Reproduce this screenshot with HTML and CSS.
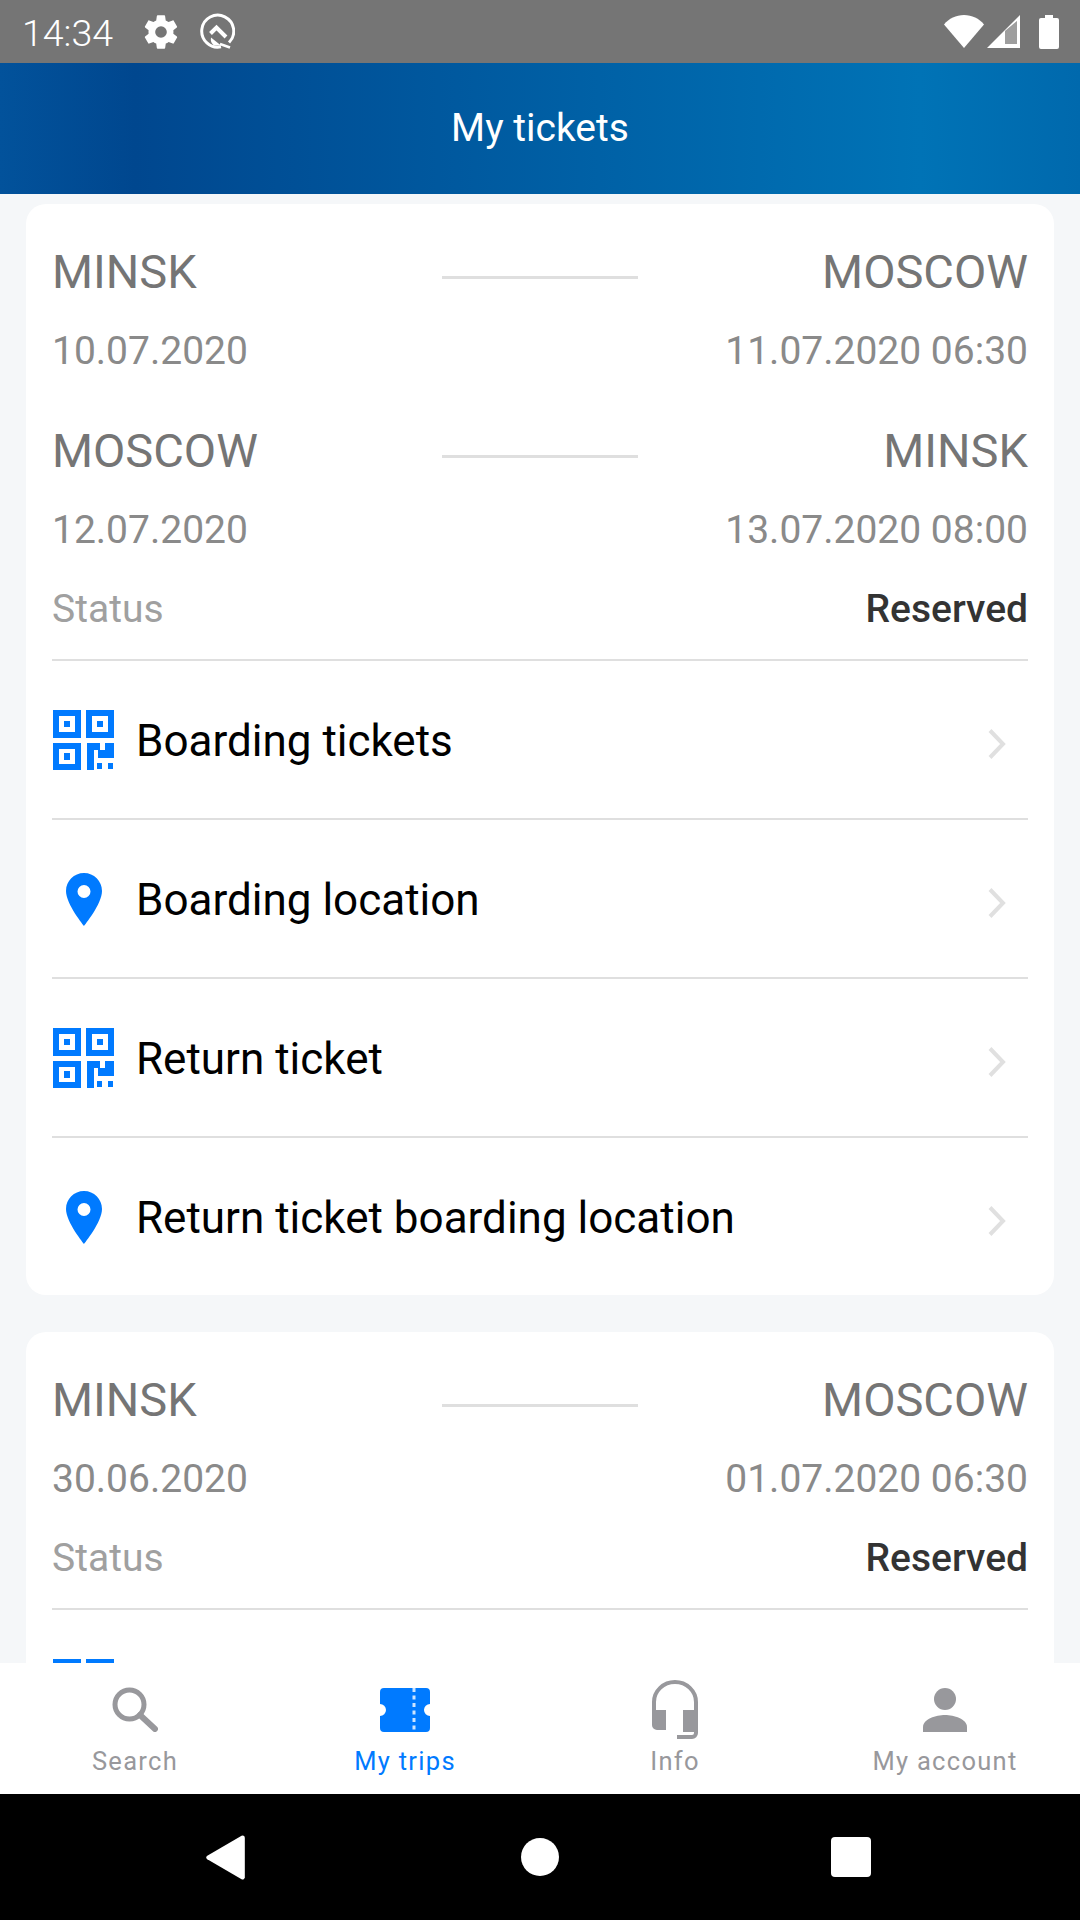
FILE: index.html
```html
<!DOCTYPE html>
<html lang="en">
<head>
<meta charset="utf-8">
<title>My tickets</title>
<link rel="stylesheet" href="styles.css">
</head>
<body>
<svg class="defs" width="0" height="0" aria-hidden="true">
  <defs>
    <symbol id="qr" viewBox="0 0 61 60">
      <path fill-rule="evenodd" d="M0 0h28v28H0zM6 6v16h16V6zM11 11h6v6h-6zM33 0h28v28H33zM39 6v16h16V6zM44 11h6v6h-6zM0 33h28v27H0zM6 39v15h16V39zM11 43h6v7h-6zM34 33h13v7h5v-7h9v15H45v-8h-4v20h-7zM44 53h5v6h-5zM55 53h5v6h-5z"/>
    </symbol>
    <symbol id="pin" viewBox="0 0 36 53">
      <path fill-rule="evenodd" d="M18 0C8 0 0 8 0 18c0 13 18 35 18 35s18-22 18-35C36 8 28 0 18 0zM18 12a6.500 6.500 0 1 1 0 13a6.500 6.500 0 0 1 0-13z"/>
    </symbol>
    <symbol id="chev" viewBox="0 0 20 32">
      <path d="M3 2.500l13 13.500L3 29.500" fill="none" stroke-width="4"/>
    </symbol>
  </defs>
</svg>

<div class="statusbar">
  <div class="status-left">
    <span class="clock">14:34</span>
    <svg class="ic-gear" viewBox="0 0 24 24"><path d="M19.400 13c.040-.320.060-.660.060-1s-.020-.680-.060-1l2.100-1.640c.190-.150.240-.420.120-.640l-2-3.460c-.120-.220-.390-.300-.610-.220l-2.490 1c-.520-.400-1.080-.730-1.690-.980l-.380-2.650A.49.490 0 0 0 14 2h-4c-.250 0-.460.180-.490.420l-.380 2.650c-.610.250-1.170.590-1.690.980l-2.490-1c-.230-.090-.490 0-.610.220l-2 3.460c-.130.220-.070.490.120.640L4.560 11c-.040.320-.060.660-.060 1s.020.680.060 1l-2.100 1.640c-.190.150-.240.420-.12.640l2 3.460c.120.220.390.300.610.220l2.490-1c.520.400 1.080.730 1.690.980l.380 2.650c.030.240.240.420.490.420h4c.250 0 .460-.180.490-.420l.380-2.650c.610-.250 1.170-.590 1.690-.980l2.490 1c.230.090.490 0 .610-.220l2-3.460c.120-.220.070-.490-.120-.640zM12 15.500a3.500 3.500 0 1 1 0-7 3.500 3.500 0 0 1 0 7z"/></svg>
    <svg class="ic-q" viewBox="0 0 36 37"><path d="M30 29.500A16 16 0 1 0 22 33.800" fill="none" stroke="#fff" stroke-width="3"/><path d="M11.500 20.500l6-6 9.500 9.500" fill="none" stroke="#fff" stroke-width="4"/><path d="M12 24.500l10 8h-7a8 8 0 0 1-3-8z" fill="#fff"/><path d="M21 31l10 3.500" fill="none" stroke="#fff" stroke-width="2.500"/></svg>
  </div>
  <div class="status-right">
    <svg class="ic-wifi" viewBox="0 0 40 33"><path d="M0 9.500C5 3.500 12 0 20 0s15 3.500 20 9.500L20 33z"/></svg>
    <svg class="ic-signal" viewBox="0 0 33 33"><path fill-rule="evenodd" d="M33 0v33H0zM30 6L18 16v13h12z"/><path class="signal-level" d="M30 6L18 16v13h12z"/></svg>
    <svg class="ic-batt" viewBox="0 0 20 34"><path d="M6 0h8v3h4a2 2 0 0 1 2 2v27a2 2 0 0 1-2 2H2a2 2 0 0 1-2-2V5a2 2 0 0 1 2-2h4z"/></svg>
  </div>
</div>

<header class="appbar"><h1 class="appbar-title">My tickets</h1></header>

<main class="content">
  <section class="card">
    <div class="route">
      <span class="city">MINSK</span><span class="rule"></span><span class="city end">MOSCOW</span>
      <span class="date">10.07.2020</span><span></span><span class="date end">11.07.2020 06:30</span>
    </div>
    <div class="route">
      <span class="city">MOSCOW</span><span class="rule"></span><span class="city end">MINSK</span>
      <span class="date">12.07.2020</span><span></span><span class="date end">13.07.2020 08:00</span>
    </div>
    <div class="status-row"><span class="status-label">Status</span><span class="status-value">Reserved</span></div>
    <a class="action"><span class="action-ic"><svg class="qr"><use href="#qr"/></svg></span><span class="action-label">Boarding tickets</span><svg class="chev"><use href="#chev"/></svg></a>
    <a class="action"><span class="action-ic"><svg class="pin"><use href="#pin"/></svg></span><span class="action-label">Boarding location</span><svg class="chev"><use href="#chev"/></svg></a>
    <a class="action"><span class="action-ic"><svg class="qr"><use href="#qr"/></svg></span><span class="action-label">Return ticket</span><svg class="chev"><use href="#chev"/></svg></a>
    <a class="action"><span class="action-ic"><svg class="pin"><use href="#pin"/></svg></span><span class="action-label">Return ticket boarding location</span><svg class="chev"><use href="#chev"/></svg></a>
  </section>
  <section class="card">
    <div class="route">
      <span class="city">MINSK</span><span class="rule"></span><span class="city end">MOSCOW</span>
      <span class="date">30.06.2020</span><span></span><span class="date end">01.07.2020 06:30</span>
    </div>
    <div class="status-row"><span class="status-label">Status</span><span class="status-value">Reserved</span></div>
    <a class="action"><span class="action-ic"><svg class="qr"><use href="#qr"/></svg></span></a>
  </section>
</main>

<nav class="tabs">
  <a class="tab">
    <svg class="tab-ic" viewBox="0 0 54 54"><circle cx="21.500" cy="21.500" r="14.500" fill="none" stroke="currentColor" stroke-width="5"/><path d="M32 32l15 14" fill="none" stroke="currentColor" stroke-width="6" stroke-linecap="round"/></svg>
    <span>Search</span>
  </a>
  <a class="tab active">
    <svg class="tab-ic" viewBox="0 0 54 54"><path fill-rule="evenodd" fill="currentColor" d="M6 5h42a4 4 0 0 1 4 4v12a6 6 0 0 0 0 12v12a4 4 0 0 1-4 4H6a4 4 0 0 1-4-4V33a6 6 0 0 0 0-12V9a4 4 0 0 1 4-4z"/><path d="M36 5v44" stroke="#fff" stroke-width="3" stroke-dasharray="4 3.500" opacity=".8"/></svg>
    <span>My trips</span>
  </a>
  <a class="tab">
    <svg class="tab-ic tab-ic-head" viewBox="0 0 54 62"><path fill="none" stroke="currentColor" stroke-width="4" d="M6 34V22a21 20 0 0 1 42 0v31a4 4 0 0 1-4 4H29"/><path fill="currentColor" d="M4 30h14v20H9a5 5 0 0 1-5-5zM35 30h14v22H35z"/></svg>
    <span>Info</span>
  </a>
  <a class="tab">
    <svg class="tab-ic" viewBox="0 0 54 54"><circle cx="27" cy="16" r="11"/><path d="M5 49v-5c0-8 13-12 22-12s22 4 22 12v5z"/></svg>
    <span>My account</span>
  </a>
</nav>

<div class="sysnav">
  <svg class="nav-back" viewBox="0 0 36 42"><path d="M34 0.500a2 2 0 0 1 2 2v37a2 2 0 0 1-3 1.700L1 22.700a2 2 0 0 1 0-3.400L33 .8z"/></svg>
  <span class="nav-home"></span>
  <span class="nav-recent"></span>
</div>
</body>
</html>
```
FILE: styles.css
```css
* { box-sizing: border-box; }
html, body { margin: 0; padding: 0; }
body {
  width: 1080px;
  height: 1920px;
  display: flex;
  flex-direction: column;
  overflow: hidden;
  font-family: Roboto, "Liberation Sans", sans-serif;
  background: #f5f7f9;
}
.defs { position: absolute; }

.statusbar {
  height: 63px;
  flex: none;
  background: #757575;
  color: #fff;
  display: flex;
  align-items: center;
  justify-content: space-between;
  padding: 0 21px 0 22px;
}
.status-left, .status-right { display: flex; align-items: center; }
.clock { font-size: 37.500px; font-weight: 300; margin-right: 28px; padding-top: 2px; }
.ic-gear { width: 40px; height: 40px; fill: #fff; margin-right: 18px; }
.ic-q { width: 36px; height: 37px; }
.ic-wifi { width: 40px; height: 33px; fill: #fff; margin-right: 3px; }
.ic-signal { width: 33px; height: 33px; fill: #fff; margin-right: 19px; }
.signal-level { opacity: .3; }
.ic-batt { width: 20px; height: 34px; fill: #fff; }

.appbar {
  height: 131px;
  flex: none;
  display: flex;
  align-items: center;
  justify-content: center;
  padding-bottom: 2px;
  background: linear-gradient(90deg, #02529b 0, #00478f 135px, #0073b6 920px, #0069ad 1080px);
}
.appbar-title { margin: 0; color: #fff; font-size: 39px; font-weight: 400; }

.content {
  flex: 1;
  min-height: 0;
  overflow: hidden;
  padding: 10px 26px 0;
  display: flex;
  flex-direction: column;
  gap: 37px;
}
.card {
  flex: none;
  background: #fff;
  border-radius: 20px;
  padding: 31px 26px 0;
}

.route {
  display: grid;
  grid-template-columns: 1fr 196px 1fr;
  grid-template-rows: 72px 86px;
  align-items: center;
}
.route + .route { margin-top: 21px; }
.city { font-size: 47px; color: #757575; }
.date { font-size: 39px; color: #8a8a8a; padding-top: 2px; }
.end { text-align: right; }
.rule { height: 3px; background: #dfdfdf; margin-top: 12px; }

.status-row {
  display: flex;
  justify-content: space-between;
  align-items: center;
  height: 87px;
  padding-bottom: 13px;
  font-size: 39px;
}
.status-label { color: #a0a0a0; }
.status-value { color: #333; font-weight: 500; }

.action {
  display: flex;
  align-items: center;
  height: 159px;
  border-top: 2px solid #dfdfdf;
  color: #000;
}
.action-ic {
  width: 84px;
  display: flex;
  justify-content: flex-start;
  padding: 1px 0 0 1px;
  flex: none;
}
.qr { width: 61px; height: 60px; fill: #007aff; filter: blur(.7px); }
.pin { width: 36px; height: 53px; fill: #007aff; margin-left: 13px; filter: blur(.5px); }
.action-label { flex: 1; font-size: 44px; padding-top: 3px; }
.chev { width: 20px; height: 32px; stroke: #e0e0e0; margin: 9px 21px 0 0; filter: blur(.4px); }

.tabs {
  height: 131px;
  flex: none;
  background: #fff;
  display: grid;
  grid-template-columns: repeat(4, 1fr);
}
.tab {
  display: flex;
  flex-direction: column;
  align-items: center;
  color: #98989c;
  fill: currentColor;
  font-size: 25.500px;
  letter-spacing: 1.300px;
  padding-top: 20px;
}
.tab-ic { width: 54px; height: 54px; flex: none; filter: blur(.6px); }
.tab-ic-head { margin-top: -3px; height: 62px; margin-bottom: -5px; }
.tab span { line-height: 30px; margin-top: 9px; }
.active { color: #007aff; }

.sysnav {
  height: 126px;
  flex: none;
  background: #000;
  display: flex;
  align-items: center;
  padding-left: 206px;
}
.nav-back { width: 39px; height: 45px; fill: #fff; flex: none; }
.nav-home { width: 38px; height: 38px; background: #fff; border-radius: 50%; margin-left: 276px; }
.nav-recent { width: 40px; height: 40px; background: #fff; border-radius: 4px; margin-left: 272px; }
```
